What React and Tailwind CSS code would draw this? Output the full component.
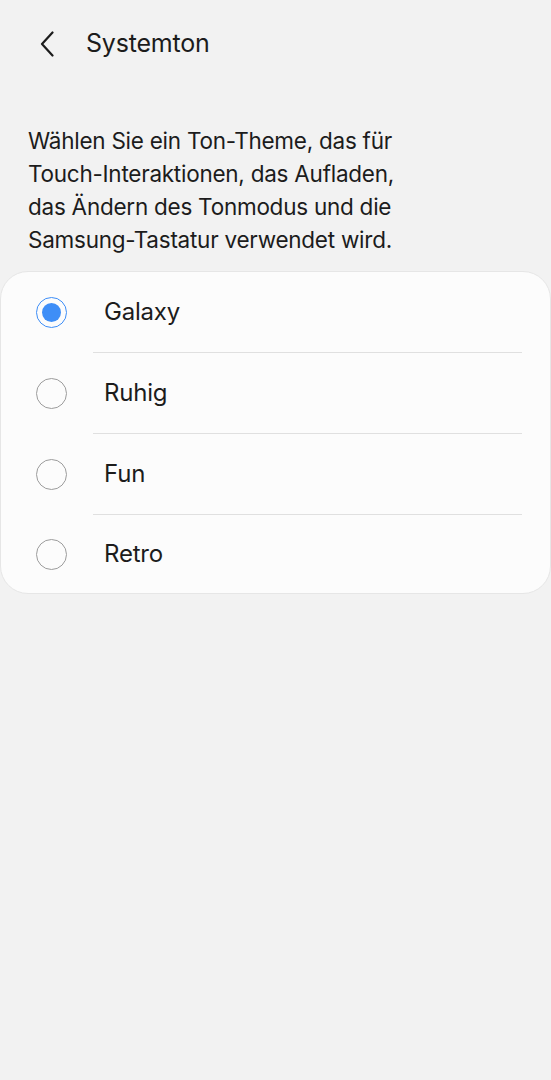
import React, { useState } from 'react';

const options = ['Galaxy', 'Ruhig', 'Fun', 'Retro'];

const Radio = ({ checked }) => (
  <span
    className={
      'flex h-[31px] w-[31px] items-center justify-center rounded-full border-[1.5px] ' +
      (checked ? 'border-[#3e8ef7]' : 'border-[#9c9c9c]')
    }
  >
    {checked && <span className="h-[19px] w-[19px] rounded-full bg-[#3e8ef7]" />}
  </span>
);

const App = () => {
  const [selected, setSelected] = useState('Galaxy');

  return (
    <div
      className="min-h-screen bg-[#f2f2f2] text-[#1c1c1c]"
      style={{ fontFamily: 'Inter, "Noto Sans", sans-serif' }}
    >
      {/* header */}
      <div className="flex h-[88px] items-center">
        <button className="ml-[36px] flex h-[26px] w-[22px] items-center justify-center">
          <svg width="14" height="26" viewBox="0 0 14 26" fill="none">
            <path d="M12.5 1.5L2 13l10.5 11.5" stroke="#1c1c1c" strokeWidth="2.2" strokeLinecap="round" strokeLinejoin="round" />
          </svg>
        </button>
        <h1 className="ml-[28px] text-[25px] font-normal tracking-[-0.2px]">Systemton</h1>
      </div>

      {/* description */}
      <p className="mt-[36px] px-[28px] text-[22.5px] leading-[33px] tracking-[-0.25px]">
        Wählen Sie ein Ton-Theme, das für
        <br />
        Touch-Interaktionen, das Aufladen,
        <br />
        das Ändern des Tonmodus und die
        <br />
        Samsung-Tastatur verwendet wird.
      </p>

      {/* card */}
      <div className="mt-[15px] rounded-[28px] border border-[#e6e6e6] bg-[#fcfcfc] pb-[0px]">
        {options.map((opt, i) => (
          <div key={opt} className="flex flex-col">
            <button
              onClick={() => setSelected(opt)}
              className={'flex items-center text-left ' + (i === options.length - 1 ? 'h-[78px]' : 'h-[80px]')}
            >
              <span className="ml-[35px]">
                <Radio checked={selected === opt} />
              </span>
              <span className="ml-[37px] text-[24px] tracking-[-0.2px]">{opt}</span>
            </button>
            {i < options.length - 1 && <div className="ml-[92px] mr-[28px] h-px bg-[#e0e0e0]" />}
          </div>
        ))}
      </div>
    </div>
  );
};

export default App;
